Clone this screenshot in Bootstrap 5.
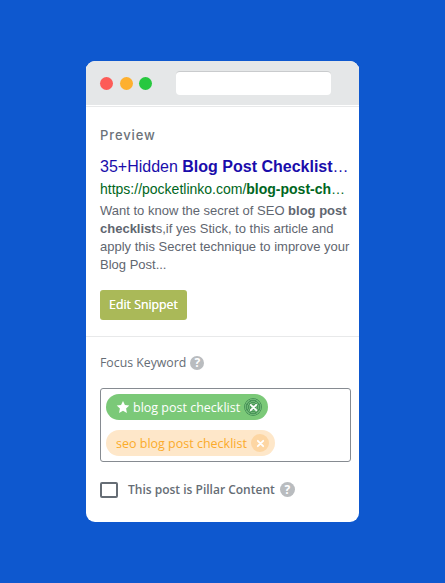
<!DOCTYPE html>
<html lang="en"><head><meta charset="utf-8"><title>Preview</title>
<link href="https://cdn.jsdelivr.net/npm/bootstrap@5.3.0/dist/css/bootstrap.min.css" rel="stylesheet">
<style>
html,body{height:100%}
body{background:#0e58cf;font-family:"Open Sans","Noto Sans",sans-serif;overflow:hidden}
.stage{width:445px;height:583px;padding:61px 86px}
.win{width:273px;height:461px;border-radius:9px;background:#fff;overflow:hidden}
.chrome{height:44px;background:#e5e7e8;padding:0 14px;margin-bottom:2px;box-shadow:0 1px 0 #fff,0 2px 0 #e8e9ea;gap:6.500px}
.dot{width:13px;height:13px;border-radius:50%;flex:none}
.dot-r{background:#fd5c58}.dot-y{background:#feb02f}.dot-g{background:#27c83f}
.addr{width:155px;height:24px;margin-left:17.500px;background:#fff;border-radius:4px;border-top:1px solid #c9cbcd}
.pane{padding:0 14px}
.pv-label{font:500 13px/16px Inter,sans-serif;letter-spacing:.9px;color:#6c7279;padding-top:20px}
.serp-t{font:16px/20px "Liberation Sans",sans-serif;color:#1a0dab;margin-top:14px;width:250px}
.serp-u{font:14px/18px "Liberation Sans",sans-serif;color:#006621;margin-top:3px;width:247px}
.serp-d{font:13px/18px "Liberation Sans",sans-serif;color:#5f6670;margin-top:4px;width:252px}
.btn-snip{background:#aab958;color:#fff;font-size:12.300px;font-weight:500;line-height:18px;padding:6px 9px;border:0;border-radius:3px;margin-top:16px;height:30px;width:87px;display:block;white-space:nowrap;text-shadow:0 0 .6px #fff}
.rule{height:1px;background:#e8e9ea;margin-top:16px}
.fk{font-size:12.300px;line-height:18px;color:#666d75;padding-top:17px;gap:4px}
.qm{width:14px;height:14px;border-radius:50%;background:#b9bcbf;color:#fff;font:700 12px/14px "Open Sans",sans-serif;text-align:center;flex:none}
.kbox{width:251px;height:74px;border:1px solid #868b91;border-radius:3px;margin-top:16px;padding:5px}
.tag{height:26px;border-radius:13px;font-size:12.500px;line-height:24px;padding:0 6px 0 10px;white-space:nowrap}
.tag-txt{padding-top:2px}
.tag-g{background:#7bc978;color:#fff;width:162px}
.tag-o{background:#fee7c9;color:#fbab2b;width:169px;margin-top:10px}
.tag-star{margin-right:3px;flex:none}
.tag-x{width:18px;height:18px;border-radius:50%;flex:none;display:flex;align-items:center;justify-content:center;margin-left:auto}
.tag-g .tag-x{background:repeating-radial-gradient(circle,#4a9459 0 1px,#6cb673 1px 2px)}
.tag-o .tag-x{background:#fdd6a3}
.pillar{margin-top:18px;height:18px;font-size:12px;font-weight:600;color:#666d75;white-space:nowrap;padding-top:1px}
.pillar .qm{margin-left:5px;width:15px;height:15px;line-height:15px}
.cb{width:18px;height:16px;border:2px solid #666d75;border-radius:2px;flex:none;margin-right:10px}
</style></head><body>
<div class="stage"><div class="win">
<div class="chrome d-flex align-items-center">
<span class="dot dot-r"></span><span class="dot dot-y"></span><span class="dot dot-g"></span><div class="addr"></div>
</div>
<div class="pane">
<div class="pv-label">Preview</div>
<div class="serp-t text-truncate">35+Hidden <b>Blog Post Checklist</b> to Improve Your Rankings</div>
<div class="serp-u text-truncate">https://pocketlinko.com/<b>blog-post-checklist/</b></div>
<div class="serp-d">Want to know the secret of SEO <b>blog post checklist</b>s,if yes Stick, to this article and apply this Secret technique to improve your Blog Post...</div>
<button type="button" class="btn btn-snip">Edit Snippet</button>
</div>
<div class="rule"></div>
<div class="pane">
<div class="fk d-flex align-items-center">Focus Keyword <span class="qm">?</span></div>
<div class="kbox">
<div class="tag tag-g d-flex align-items-center">
<svg class="tag-star" width="14" height="14" viewBox="0 0 24 24"><path fill="#fff" d="M12 1.500l3.300 6.900 7.500 1-5.500 5.200 1.400 7.500L12 18.400l-6.700 3.700 1.400-7.500L1.200 9.400l7.500-1z"/></svg>
<span class="tag-txt">blog post checklist</span>
<span class="tag-x"><svg width="9" height="9" viewBox="0 0 10 10"><path d="M2 2l6 6M8 2l-6 6" stroke="#fff" stroke-width="2" stroke-linecap="round"/></svg></span>
</div>
<div class="tag tag-o d-flex align-items-center">
<span class="tag-txt">seo blog post checklist</span>
<span class="tag-x"><svg width="9" height="9" viewBox="0 0 10 10"><path d="M2 2l6 6M8 2l-6 6" stroke="#fff" stroke-width="2" stroke-linecap="round"/></svg></span>
</div>
</div>
<div class="pillar d-flex align-items-center"><span class="cb"></span>This post is Pillar Content<span class="qm">?</span></div>
</div>
</div></div>
</body></html>
